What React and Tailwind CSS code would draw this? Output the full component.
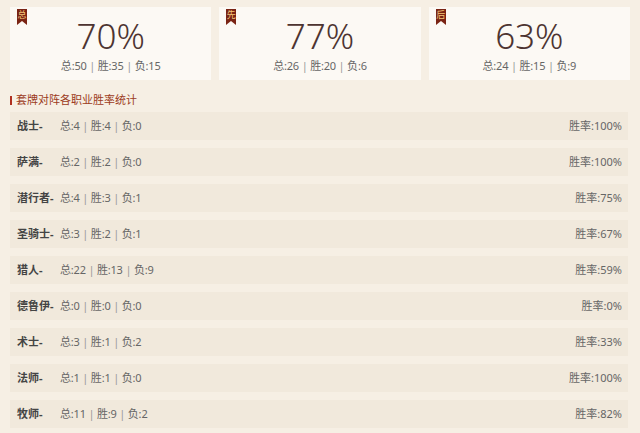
import React from 'react';

const summary = [
  { tag: '总', rate: '70%', total: 50, win: 35, lose: 15 },
  { tag: '先', rate: '77%', total: 26, win: 20, lose: 6 },
  { tag: '后', rate: '63%', total: 24, win: 15, lose: 9 },
];

const classes = [
  { name: '战士', total: 4, win: 4, lose: 0, rate: '100%' },
  { name: '萨满', total: 2, win: 2, lose: 0, rate: '100%' },
  { name: '潜行者', total: 4, win: 3, lose: 1, rate: '75%' },
  { name: '圣骑士', total: 3, win: 2, lose: 1, rate: '67%' },
  { name: '猎人', total: 22, win: 13, lose: 9, rate: '59%' },
  { name: '德鲁伊', total: 0, win: 0, lose: 0, rate: '0%' },
  { name: '术士', total: 3, win: 1, lose: 2, rate: '33%' },
  { name: '法师', total: 1, win: 1, lose: 0, rate: '100%' },
  { name: '牧师', total: 11, win: 9, lose: 2, rate: '82%' },
];

const Stats = ({ total, win, lose }) => (
  <span className="tracking-[-0.2px]">
    总:{total} <span className="text-[#999]">|</span> 胜:{win} <span className="text-[#999]">|</span> 负:{lose}
  </span>
);

const Ribbon = ({ tag }) => (
  <div className="absolute left-[7px] top-[2px] w-[10px] h-[16px]">
    <svg width="10" height="16" viewBox="0 0 10 16" className="absolute inset-0">
      <path d="M0 0H10V16L5 12L0 16Z" fill="#7a2414" />
    </svg>
    <span className="absolute left-0 top-[1px] w-[10px] text-center text-[9px] leading-[10px] text-[#f3c77a]">
      {tag}
    </span>
  </div>
);

export default function App() {
  return (
    <div
      className="w-[640px] h-[433px] overflow-hidden bg-[#f6efe4] px-[10px] pt-[7px]"
      style={{ fontFamily: '"Noto Sans", "Noto Sans CJK SC", sans-serif' }}
    >
      {/* summary cards */}
      <div className="grid grid-cols-3 gap-[8px]">
        {summary.map((s) => (
          <div key={s.tag} className="relative h-[73px] bg-[#fcf9f4] flex flex-col items-center">
            <Ribbon tag={s.tag} />
            <div className="mt-[7px] text-[35px] leading-[44px] font-light text-[#4d3431]">{s.rate}</div>
            <div className="mt-[1px] text-[11px] leading-[14px] text-[#666]">
              <Stats total={s.total} win={s.win} lose={s.lose} />
            </div>
          </div>
        ))}
      </div>

      {/* section title */}
      <div className="mt-[13px] flex items-center gap-[4px] text-[11px] leading-[14px] text-[#9c3b22]">
        <span className="w-[2px] h-[9px] bg-[#b03020]" />
        <span>套牌对阵各职业胜率统计</span>
      </div>

      {/* class rows */}
      <div className="mt-[5px] flex flex-col gap-[8px]">
        {classes.map((c) => (
          <div key={c.name} className="h-[28px] bg-[#f1e9dc] flex items-center pl-[7px] pr-[6px] text-[11px] text-[#666] mr-[2px]">
            <span className="w-[43px] font-bold text-[#444]">{c.name}-</span>
            <Stats total={c.total} win={c.win} lose={c.lose} />
            <span className="ml-auto">胜率:{c.rate}</span>
          </div>
        ))}
      </div>
    </div>
  );
}
